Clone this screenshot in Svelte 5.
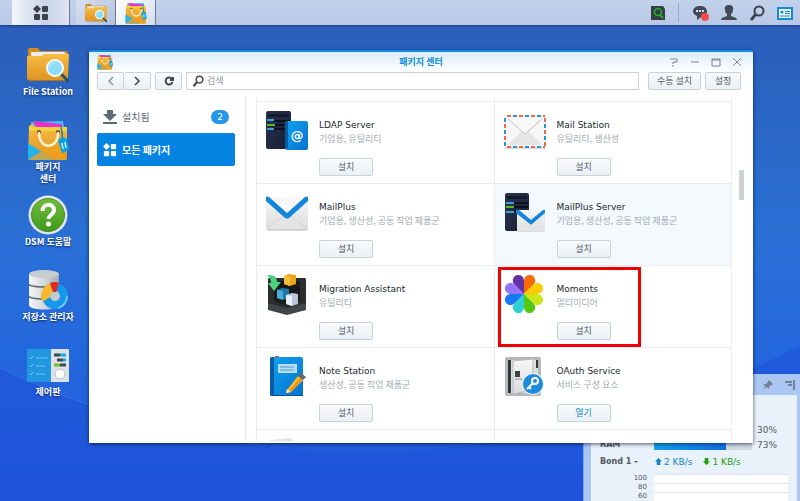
<script>
	let search = $state("");
	let selected = $state("all");

	const shortcuts = [
		{ icon: "folder", lines: ["File Station"] },
		{ icon: "bag", lines: ["패키지", "센터"] },
		{ icon: "help", lines: ["DSM 도움말"] },
		{ icon: "storage", lines: ["저장소 관리자"] },
		{ icon: "control", lines: ["제어판"] }
	];

	const packages = [
		{ icon: "ldap", glyph: "@", name: "LDAP Server", tags: "기업용, 유틸리티", action: "설치" },
		{ icon: "mailstation", name: "Mail Station", tags: "유틸리티, 생산성", action: "설치" },
		{ icon: "mailplus", name: "MailPlus", tags: "기업용, 생산성, 공동 작업 제품군", action: "설치" },
		{ icon: "mailserver", name: "MailPlus Server", tags: "기업용, 생산성, 공동 작업 제품군", action: "설치", hover: true },
		{ icon: "migration", name: "Migration Assistant", tags: "유틸리티", action: "설치" },
		{ icon: "moments", name: "Moments", tags: "멀티미디어", action: "설치", marked: true },
		{ icon: "note", name: "Note Station", tags: "생산성, 공동 작업 제품군", action: "설치" },
		{ icon: "oauth", name: "OAuth Service", tags: "서비스 구성 요소", action: "열기", open: true }
	];

	// clockwise, starting right of twelve o'clock
	const petals = ["#fa6b05", "#ffcc05", "#cce619", "#54c614", "#2ed0cf", "#1679f3", "#9474f8", "#6432a4"];

	const usage = [
		{ label: "", value: 30 },
		{ label: "RAM", value: 73 }
	];

	const scale = [100, 80, 60, 40];
</script>

<svg class="defs" width="0" height="0" aria-hidden="true">
	<defs>
		<linearGradient id="gold" x1="0" y1="0" x2="0" y2="1">
			<stop offset="0" stop-color="#f8bd45" />
			<stop offset="1" stop-color="#de9420" />
		</linearGradient>
		<linearGradient id="green" x1="0" y1="0" x2="0" y2="1">
			<stop offset="0" stop-color="#71bd3c" />
			<stop offset="1" stop-color="#3f9a1c" />
		</linearGradient>
		<linearGradient id="silver" x1="0" y1="0" x2="1" y2="0">
			<stop offset="0" stop-color="#f4f5f6" />
			<stop offset="0.5" stop-color="#d5d9dd" />
			<stop offset="1" stop-color="#a4aab0" />
		</linearGradient>
		<linearGradient id="paper" x1="0" y1="0" x2="0" y2="1">
			<stop offset="0" stop-color="#f6f6f6" />
			<stop offset="1" stop-color="#dcdcdd" />
		</linearGradient>
		<linearGradient id="azure" x1="0" y1="0" x2="1" y2="1">
			<stop offset="0" stop-color="#12a2ee" />
			<stop offset="1" stop-color="#0673cf" />
		</linearGradient>
		<linearGradient id="navy" x1="0" y1="0" x2="1" y2="1">
			<stop offset="0" stop-color="#29324f" />
			<stop offset="1" stop-color="#181d33" />
		</linearGradient>
	</defs>

	<symbol id="folder" viewBox="0 0 42 42">
		<path d="M1 6q0-2 2-2h8l2 3h26q2 0 2 2v8H1z" fill="#d78d1c" />
		<path d="M4 8h33l3 3v5H4z" fill="#ececec" />
		<path d="M0 12h14l4-2h24l-1 24q0 2-2 2H2q-2 0-2-2z" fill="url(#gold)" />
		<path d="M1 36h39v1H1z" fill="#b3720f" />
		<path d="M33 29l8 8" stroke="#25536b" stroke-width="3" stroke-linecap="round" />
		<circle cx="28" cy="24" r="8" fill="#8bdcfa" stroke="#f3fbff" stroke-width="2" />
		<path d="M23 24q0-5 5-5" stroke="#c8f2ff" fill="none" />
	</symbol>

	<symbol id="bag" viewBox="0 0 42 42">
		<path d="M4 3l32-1 2 12H5z" fill="#3ac4f3" />
		<path d="M6 2l29 3v10H12z" fill="#e832cf" />
		<path d="M2 7l3-2 4 3h31v31q0 2-2 2H3q-2 0-2-2z" fill="url(#gold)" />
		<path d="M2 8h38v4H2z" fill="#f7d23b" />
		<path d="M1 24l27 17H3q-2 0-2-2z" fill="#25b3ee" />
		<path d="M1 41l24-16 15 14q0 2-2 2z" fill="#f2a21e" opacity=".75" />
		<circle cx="12" cy="13" r="2" fill="#624c29" />
		<circle cx="31" cy="13" r="2" fill="#624c29" />
		<path d="M12 14c0 17 19 17 19 0" fill="none" stroke="#fff3d2" stroke-width="2.500" stroke-linecap="round" />
		<path d="M34 8q2 7 1 14" fill="none" stroke="#2279a5" stroke-width="1.5" />
		<path d="M31 21l5-3 4 2 2 11-7 3z" fill="#0ba0de" />
		<path d="M35 24l1 6M38 23l1 6" stroke="#c8f1ff" stroke-width="1.5" />
	</symbol>

	<symbol id="help" viewBox="0 0 42 42">
		<circle cx="21" cy="21" r="19.500" fill="#dfe5ec" />
		<circle cx="21" cy="21" r="16.500" fill="url(#green)" stroke="#4a8b29" />
		<path d="M15.500 17c0-8 11.500-8 11.500-1 0 5-5.500 5-5.500 9" fill="none" stroke="#fff" stroke-width="4" />
		<circle cx="21.500" cy="30" r="2.500" fill="#fff" />
	</symbol>

	<symbol id="storage" viewBox="0 0 42 42">
		<path d="M2 5v31c0 6 30 6 30 0V5z" fill="url(#silver)" />
		<ellipse cx="17" cy="5" rx="15" ry="4" fill="#c8cdd2" />
		<path d="M2 15c0 4 30 4 30 0M2 27c0 4 30 4 30 0" fill="none" stroke="#5d6973" stroke-width="1.500" />
		<circle cx="28" cy="27" r="9" fill="none" stroke="#1698ea" stroke-width="8" />
		<circle cx="28" cy="27" r="5" fill="#c3c9cf" />
		<path d="M14 29a14 14 0 0 1 9-15l3 9a5 5 0 0 0-3 5l-6 4q-2-1-3-3z" fill="#f7b92c" />
		<path d="M23 14q5-2 9 0l-3 9h-3z" fill="#e22a22" />
		<path d="M40 27a12 12 0 0 1-9 12" fill="none" stroke="#69c8fb" stroke-width="2" />
	</symbol>

	<symbol id="control" viewBox="0 0 42 42">
		<path d="M0 5h24v33H0z" fill="#2097df" />
		<path d="M24 5h17q1 0 1 1v31q0 1-1 1H24z" fill="#dce3e8" />
		<path d="M3 14l1 1 2-3M3 22l1 1 2-3M3 30l1 1 2-3M9 14h12M9 22h9M9 30h9" fill="none" stroke="#69c7f5" />
		<path d="M27 11h6M30 16h6M33 21h6" stroke="#40484e" stroke-width="3" />
		<path d="M33 11h6M36 16h3" stroke="#18a7df" stroke-width="3" />
		<path d="M27 21h6" stroke="#6fbe27" stroke-width="3" />
		<circle cx="33" cy="30" r="5" fill="#fff" stroke="#b6c0c7" />
	</symbol>

	<symbol id="ldap" viewBox="0 0 42 42">
		<path d="M0 3q0-2 2-2h21q2 0 2 2v36H2q-2 0-2-2z" fill="url(#navy)" />
		<path d="M2 4h21v3H2z" fill="#141a2a" />
		<path d="M8 11h16M8 15h16M8 19h16" stroke="#0c101c" stroke-width="2" />
		<path d="M1 10h7M1 19h7" stroke="#3f9fd1" stroke-width="2" />
		<path d="M1 15h8" stroke="#58bd19" stroke-width="2" />
		<path d="M19 14q0-3 3-3h18q2 0 2 2v25q0 2-2 2H22q-3 0-3-2z" fill="url(#azure)" />
		<path d="M19 14q0-3 3-3v27q-3 0-3 2z" fill="#055aa2" />
	</symbol>

	<symbol id="mailstation" viewBox="0 0 42 42">
		<rect x="0" y="5" width="42" height="33" rx="1" fill="#f7f7f7" />
		<path d="M1 38h40" stroke="#b9bbbd" />
		<path d="M3 6h38M3 37h38" stroke="#ed6b45" stroke-width="2" stroke-dasharray="4 8" />
		<path d="M9 6h32M9 37h32" stroke="#2995db" stroke-width="2" stroke-dasharray="4 8" />
		<path d="M1 8v28M41 14v22" stroke="#2995db" stroke-width="2" stroke-dasharray="4 8" />
		<path d="M1 14v22M41 8v28" stroke="#ed6b45" stroke-width="2" stroke-dasharray="4 8" />
		<path d="M3 35l15-14h6l15 14z" fill="#e6e6e7" />
		<path d="M4 9l17 15L38 9" fill="#f9f9f9" stroke="#bcbec1" />
	</symbol>

	<symbol id="mailplus" viewBox="0 0 42 42">
		<path d="M0 6h42v30q0 2-2 2H2q-2 0-2-2z" fill="url(#paper)" />
		<path d="M1 37l19-15h2l19 15" fill="#e4e4e5" stroke="#d2d2d4" />
		<path d="M1 37q0 1 2 1h36q2 0 2-1" fill="none" stroke="#b9babc" />
		<path d="M1 7q20 0 40 0L21 24z" fill="#f8f8f8" />
		<path d="M0 5q2-1 3 0l18 16L39 5q1-1 3 0v4L23 26q-2 1-4 0L0 9z" fill="#1485dd" />
	</symbol>

	<symbol id="mailserver" viewBox="0 0 42 42">
		<path d="M1 3q0-2 2-2h20q2 0 2 2v36H3q-2 0-2-2z" fill="url(#navy)" />
		<path d="M3 4h20v3H3z" fill="#141a2a" />
		<path d="M9 11h15M9 15h15M9 19h15" stroke="#0c101c" stroke-width="2" />
		<path d="M2 11h8M2 20h8" stroke="#3f9fd1" stroke-width="2" />
		<path d="M2 15h8" stroke="#58bd19" stroke-width="2" />
		<path d="M13 18h28v20q0 2-2 2H13z" fill="url(#paper)" />
		<path d="M13 39l13-11h2l13 11" fill="#e4e4e5" />
		<path d="M12 18h3l12 10 12-10h2v3L28 32q-1 1-2 0L12 21z" fill="#1485dd" />
	</symbol>

	<symbol id="migration" viewBox="0 0 42 42">
		<path d="M3 4h36q1 0 1 2v26l-19 7-19-7V5z" fill="#2b2d2f" />
		<path d="M8 7h26v20l-13 5-13-5z" fill="#17191b" />
		<path d="M2 29l19 5 19-5v7l-19 5-19-5z" fill="#424548" />
		<path d="M18 2l5-2 7 1v9l-6 2-6-2z" fill="#e9a51c" />
		<path d="M18 2l6 1v9l-6-2z" fill="#f7bd38" />
		<path d="M11 16l5-2 7 1v9l-6 2-6-2z" fill="#2176ac" />
		<path d="M11 16l6 1v9l-6-2z" fill="#4caad6" />
		<path d="M20 21l6-2 6 1v10l-6 2-6-2z" fill="#bac6d7" />
		<path d="M20 21l6 1v10l-6-2z" fill="#e8eff7" />
		<path d="M1 1q10-1 10 7h4L8 17 2 9h3q0-5-4-8z" fill="#4ad27c" />
	</symbol>

	<symbol id="moments" viewBox="0 0 42 42">
		{#each petals as color, i}
			<path
				d="M0 0L-5.200-12.500A5.600 5.600 0 1 1 5.200-12.500z"
				transform="translate(20 20) rotate({22.5 + i * 45})"
				fill={color} />
		{/each}
	</symbol>

	<symbol id="note" viewBox="0 0 42 42">
		<path d="M6 1h6v3H6z" fill="#efba26" />
		<path d="M9 0h4v3H9zM13 1h3v3h-3z" fill="#ef3d36" />
		<rect x="4" y="1" width="33" height="39" rx="2" fill="url(#azure)" />
		<path d="M4 3q0-2 2-2h2v39H6q-2 0-2-2z" fill="#075ba8" />
		<rect x="12" y="8" width="19" height="9" fill="#b6dff7" />
		<path d="M14 11h14M14 14h14" stroke="#5397ce" />
		<path d="M5 39h32v1H5z" fill="#064f95" />
		<path d="M21 34l11-14 5 4-12 12-5 1z" fill="#fbbd22" />
		<path d="M23 35l11-13 2 1-11 13z" fill="#ef8f16" />
		<path d="M20 36l1-3 4 3-5 1z" fill="#f4dfb3" />
		<path d="M32 20l3-3 5 4-3 3z" fill="#626b72" />
	</symbol>

	<symbol id="oauth" viewBox="0 0 42 42">
		<rect x="1" y="1" width="36" height="39" rx="2" fill="#b5b7ba" />
		<path d="M4 4h30v33H4z" fill="#dedfe0" />
		<path d="M4 4h3v33H4zM32 4h2v8h-2z" fill="#34363a" />
		<path d="M9 5l20-2v31l-20 4z" fill="url(#paper)" stroke="#b7babd" />
		<path d="M11 15h5v6h-5z" fill="#3d4146" />
		<path d="M11 23h7" stroke="#8c9094" />
		<circle cx="29" cy="28" r="11" fill="#e7f0f8" />
		<circle cx="29" cy="28" r="10" fill="#1c89d9" />
		<circle cx="31" cy="25" r="3" fill="none" stroke="#fff" stroke-width="2" />
		<path d="M29 27l-6 6M25 31l2 2" stroke="#fff" stroke-width="2" />
	</symbol>

	<symbol id="grid4" viewBox="0 0 16 16">
		<path d="M4 0l4 4-4 4-4-4z" />
		<rect x="9" y="1" width="6" height="6" rx="1" />
		<rect x="1" y="9" width="6" height="6" rx="1" />
		<rect x="9" y="9" width="6" height="6" rx="1" />
	</symbol>

	<symbol id="lens" viewBox="0 0 16 16">
		<circle cx="10" cy="6" r="4.500" fill="none" stroke="currentColor" stroke-width="2" />
		<path d="M7 9l-5 6" stroke="currentColor" stroke-width="3" />
	</symbol>
</svg>

<div class="desktop">
	<svg class="wallpaper" viewBox="0 0 800 501" preserveAspectRatio="none" aria-hidden="true">
		<path d="M0 368C60 395 110 420 260 445S650 430 800 345V501H0z" fill="#1d50d8" opacity=".5" />
		<path d="M0 368C60 395 110 420 260 445" fill="none" stroke="#3f86ec" opacity=".5" />
	</svg>

	<header class="taskbar">
		<button class="task menu" aria-label="Main menu"><svg><use href="#grid4" /></svg></button>
		<button class="task" aria-label="File Station"><svg><use href="#folder" /></svg></button>
		<button class="task active" aria-label="Package Center"><svg><use href="#bag" /></svg></button>

		<div class="tray">
			<button aria-label="Resource monitor">
				<svg viewBox="0 0 16 16">
					<path d="M1 1h12l2 3v11H1z" fill="#363d48" />
					<circle cx="8" cy="7" r="3.500" fill="none" stroke="#1eb51e" stroke-width="1.500" />
					<path d="M10 10l3 3" stroke="#1eb51e" stroke-width="2" />
				</svg>
			</button>
			<span class="split"></span>
			<button aria-label="Notifications">
				<svg viewBox="0 0 16 16">
					<path d="M7 1c4 0 7 2 7 5.500S11 12 8 12l-4 3v-4C2 10 0 9 0 6.500 0 3 3 1 7 1z" fill="#414954" />
					<path d="M3 6h2M6 6h2M9 6h2" stroke="#d5dded" stroke-width="2" />
					<circle cx="12" cy="12" r="4" fill="#fb4b4b" />
				</svg>
			</button>
			<button aria-label="Options">
				<svg viewBox="0 0 16 16">
					<path d="M8 0c3 0 5 2 4 5 0 2-1 3-2 4v2l5 2q1 1 1 2H0q0-1 1-2l5-2V9C5 8 4 7 4 5 3 2 5 0 8 0z" fill="#414954" />
				</svg>
			</button>
			<button aria-label="Search"><svg><use href="#lens" /></svg></button>
			<button aria-label="Widgets">
				<svg viewBox="0 0 16 16">
					<rect x="1" y="3" width="14" height="11" fill="#e8f5fd" stroke="#168bd3" stroke-width="2" />
					<path d="M1 3h14" stroke="#168bd3" stroke-width="2" />
					<circle cx="5" cy="7" r="1.500" fill="#168bd3" />
					<path d="M8 6.500h5M8 8.500h5M3 11h10" stroke="#168bd3" />
				</svg>
			</button>
		</div>
	</header>

	<nav class="shortcuts">
		{#each shortcuts as item}
			<a href="#{item.icon}">
				<svg><use href="#{item.icon}" /></svg>
				{#each item.lines as line}
					<span>{line}</span>
				{/each}
			</a>
		{/each}
	</nav>

	<aside class="widget">
		<div class="widget-bar">
			<svg viewBox="0 0 10 10"><path d="M6 0l4 4-1 1H8L6 7v2L3 7 0 10l2-4-2-2h3l2-2V1z" fill="#71819b" /></svg>
			<svg viewBox="0 0 10 10"><path d="M0 2h7M3 5h4M9 0v10" stroke="#71819b" stroke-width="2" fill="none" /></svg>
		</div>
		<div class="widget-body">
			{#each usage as row}
				<div class="usage">
					<b>{row.label}</b>
					<div class="track"><div class="fill" style="width: {row.value}%"></div></div>
					<span>{row.value}%</span>
				</div>
			{/each}
			<div class="net">
				<button>Bond 1 <i></i></button>
				<span class="up"><svg viewBox="0 0 8 8"><path d="M4 0l4 4H6v4H2V4H0z" /></svg>2 KB/s</span>
				<span class="down"><svg viewBox="0 0 8 8"><path d="M4 8l4-4H6V0H2v4H0z" /></svg>1 KB/s</span>
			</div>
			<div class="chart">
				{#each scale as tick}
					<span>{tick}</span>
					<div></div>
				{/each}
			</div>
		</div>
	</aside>

	<main class="window">
		<div class="titlebar">
			<svg class="app"><use href="#bag" /></svg>
			<h1>패키지 센터</h1>
			<div class="controls">
				<button aria-label="Help"><svg viewBox="0 0 10 10"><path d="M1 2h7v3H4v2M4 8v2" /></svg></button>
				<button aria-label="Minimize"><svg viewBox="0 0 10 10"><path d="M1 5h8" /></svg></button>
				<button aria-label="Maximize"><svg viewBox="0 0 10 10"><path d="M1 2h8v7H1zM1 3h8" /></svg></button>
				<button aria-label="Close"><svg viewBox="0 0 10 10"><path d="M1 1l8 8M9 1L1 9" /></svg></button>
			</div>
		</div>

		<div class="toolbar">
			<div class="pair">
				<button class="btn off" aria-label="Back"><svg viewBox="0 0 10 10"><path d="M7 1L3 5l4 4" /></svg></button>
				<button class="btn" aria-label="Forward"><svg viewBox="0 0 10 10"><path d="M3 1l4 4-4 4" /></svg></button>
			</div>
			<button class="btn reload" aria-label="Refresh">
				<svg viewBox="0 0 10 10"><path d="M8 3a3.500 3.500 0 1 0 .5 3" /><path d="M6 4h3V1" /></svg>
			</button>
			<label class="search">
				<svg><use href="#lens" /></svg>
				<input type="text" placeholder="검색" aria-label="검색" bind:value={search} />
			</label>
			<button class="btn manual">수동 설치</button>
			<button class="btn settings">설정</button>
		</div>

		<div class="content">
			<nav class="side">
				<button class:selected={selected === "installed"} onclick={() => (selected = "installed")}>
					<svg viewBox="0 0 14 14"><path d="M4 0h6v4h4l-7 7-7-7h4zM0 12h14v2H0z" /></svg>
					설치됨
					<span class="count">2</span>
				</button>
				<button class:selected={selected === "all"} onclick={() => (selected = "all")}>
					<svg><use href="#grid4" /></svg>
					모든 패키지
				</button>
			</nav>

			<div class="list">
				<div></div>
				<div></div>
				{#each packages as pkg}
					<article class:hover={pkg.hover}>
						<svg>
							<use href="#{pkg.icon}" />
							{#if pkg.glyph}
								<text x="31" y="30" text-anchor="middle">{pkg.glyph}</text>
							{/if}
						</svg>
						<div>
							<h2>{pkg.name}</h2>
							<p>{pkg.tags}</p>
							<button class="btn" class:open={pkg.open}>{pkg.action}</button>
						</div>
						{#if pkg.marked}
							<span class="mark"></span>
						{/if}
					</article>
				{/each}
				<article>
					<svg viewBox="0 0 42 42"><path d="M4 2l12-1 7-1 4 2v30H4z" fill="#dfe4e8" /></svg>
				</article>
				<article></article>
			</div>
			<div class="scroll"><span></span></div>
		</div>
	</main>
</div>

<style>
	:global(body) {
		margin: 0;
	}

	.defs {
		position: absolute;
	}

	.desktop {
		position: relative;
		min-height: 100vh;
		overflow: hidden;
		background: linear-gradient(180deg, #2c5cb6 0, #2b66c4 22%, #2a70d6 48%, #2367de 72%, #2057dc 100%);
		font-family: "DejaVu Sans", "Noto Sans CJK KR", sans-serif;
		font-size: 9px;
		line-height: 14px;
		color: #505a64;
	}

	.wallpaper {
		position: absolute;
		inset: 0;
		width: 100%;
		height: 100%;
	}

	button {
		font: inherit;
		color: inherit;
		margin: 0;
		padding: 0;
		border: 0;
		background: none;
		cursor: pointer;
	}

	svg {
		flex: none;
	}

	/* taskbar */
	.taskbar {
		position: relative;
		display: flex;
		height: 25px;
		padding-left: 12px;
		background: linear-gradient(#c3d2eb, #b9c9e6);
		box-shadow: 0 1px 2px rgba(10, 35, 90, 0.6);
	}

	.task {
		display: flex;
		align-items: center;
		justify-content: center;
		width: 40px;
		border-right: 1px solid #6c7c9c;
		background: linear-gradient(135deg, #d7e0f1, #b3c1dd);
	}

	.task svg {
		width: 22px;
		height: 22px;
	}

	.menu {
		width: 58px;
		margin-right: 6px;
		background: linear-gradient(90deg, #f2f5fb, #c9d3e7 60%, #dfe6f3);
	}

	.menu svg {
		width: 16px;
		height: 16px;
		fill: #3b424d;
	}

	.active {
		background: linear-gradient(135deg, #fff, #d5ddec);
	}

	.tray {
		display: flex;
		align-items: center;
		gap: 12px;
		margin-left: auto;
		padding-right: 7px;
		color: #3b424d;
	}

	.tray button,
	.tray svg {
		display: block;
		width: 16px;
		height: 16px;
	}

	.split {
		width: 1px;
		height: 19px;
		margin-right: 2px;
		background: #98a7c3;
	}

	/* desktop shortcuts */
	.shortcuts {
		position: relative;
		display: grid;
		grid-auto-rows: 75px;
		width: 96px;
		padding-top: 19px;
	}

	.shortcuts a {
		display: flex;
		flex-direction: column;
		align-items: center;
		color: #fff;
		font-family: "Noto Sans CJK KR", sans-serif;
		font-weight: 700;
		line-height: 12px;
		text-decoration: none;
		text-shadow: 0 1px 2px rgba(0, 20, 70, 0.8);
	}

	.shortcuts svg {
		width: 42px;
		height: 42px;
	}

	/* package center window */
	.window {
		position: absolute;
		inset: 50px 47px 58px 89px;
		display: flex;
		flex-direction: column;
		box-sizing: border-box;
		border-top: 2px solid #0d8de4;
		background: #fff;
		box-shadow: 0 1px 4px rgba(0, 15, 60, 0.7);
	}

	.titlebar {
		display: flex;
		align-items: center;
		height: 20px;
		padding: 0 11px 0 8px;
		background: linear-gradient(#dcedfb, #fff);
	}

	.app {
		width: 16px;
		height: 16px;
	}

	h1 {
		flex: 1;
		margin: 0;
		padding-left: 60px;
		color: #0d8bdc;
		font: 700 9px/14px "Noto Sans CJK KR", sans-serif;
		text-align: center;
	}

	.controls {
		display: flex;
		gap: 11px;
	}

	.controls svg {
		display: block;
		width: 10px;
		height: 10px;
		fill: none;
		stroke: #7b8794;
	}

	.toolbar {
		display: flex;
		padding: 0 12px 0 8px;
	}

	.btn {
		display: flex;
		align-items: center;
		justify-content: center;
		box-sizing: border-box;
		height: 18px;
		border: 1px solid #c8d2db;
		border-radius: 2px;
		background: linear-gradient(#f9fbfd, #eaf0f6);
		font-family: "Noto Sans CJK KR", sans-serif;
	}

	.toolbar .btn {
		width: 27px;
	}

	.btn svg {
		width: 10px;
		height: 10px;
		fill: none;
		stroke: #3f4750;
		stroke-width: 2;
	}

	.pair {
		display: flex;
		margin-right: 4px;
	}

	.pair .btn + .btn {
		border-left: 0;
	}

	.pair .btn svg {
		stroke-width: 1.5;
	}

	.off svg {
		stroke: #8b949d;
	}

	.search {
		display: flex;
		flex: 1;
		align-items: center;
		box-sizing: border-box;
		height: 18px;
		margin: 0 9px 0 4px;
		padding: 0 5px;
		border: 1px solid #cbd3da;
		color: #414951;
	}

	.search svg {
		width: 12px;
		height: 12px;
	}

	input {
		flex: 1;
		min-width: 0;
		padding: 0 3px;
		border: 0;
		outline: 0;
		background: none;
		font: 9px/14px "Noto Sans CJK KR", sans-serif;
	}

	input::placeholder {
		color: #8c959e;
	}

	.toolbar .manual {
		width: 53px;
		margin-right: 4px;
	}

	.toolbar .settings {
		width: 36px;
	}

	.content {
		display: flex;
		flex: 1;
		min-height: 0;
		margin: 7px 0 2px;
	}

	.side {
		width: 138px;
		padding: 3px 10px 0 8px;
		border-right: 1px solid #e4e8ec;
		box-shadow: 1px 0 1px #f4f6f8;
		font-family: "Noto Sans CJK KR", sans-serif;
	}

	.side button {
		display: flex;
		align-items: center;
		gap: 5px;
		box-sizing: border-box;
		width: 100%;
		height: 33px;
		padding: 0 6px;
		border-radius: 2px;
		color: #606a74;
		font-size: 10px;
	}

	.side svg {
		width: 14px;
		height: 14px;
		fill: currentColor;
	}

	.side .selected {
		background: #0584e4;
		color: #fff;
		font-weight: 700;
	}

	.count {
		width: 18px;
		margin-left: auto;
		border-radius: 7px;
		background: #2596e8;
		color: #fff;
		font: 9px/14px "DejaVu Sans", sans-serif;
		text-align: center;
	}

	.list {
		display: grid;
		flex: 1;
		grid-template-columns: 1fr 1fr;
		grid-template-rows: 5px;
		grid-auto-rows: min-content;
		align-content: start;
		overflow: hidden;
		margin-left: 10px;
		border-right: 1px solid #e9edf1;
	}

	.list > * {
		border-bottom: 1px solid #e9edf1;
		border-left: 1px solid #e9edf1;
	}

	article {
		position: relative;
		display: flex;
		gap: 11px;
		min-height: 73px;
		padding: 8px 0 0 9px;
	}

	.hover {
		background: #f4f9fe;
	}

	article > svg {
		width: 42px;
		height: 42px;
	}

	article text {
		fill: #fff;
		font-size: 13px;
		font-weight: 700;
	}

	article > div {
		padding: 8px 0 7px;
	}

	h2,
	p {
		margin: 0;
		font-size: 9px;
		font-weight: 400;
		line-height: 14px;
	}

	h2 {
		color: #22282e;
	}

	p {
		color: #a4abb2;
		font-family: "Noto Sans CJK KR", sans-serif;
	}

	article .btn {
		width: 54px;
		margin-top: 12px;
	}

	.open {
		color: #0d8bcb;
	}

	.mark {
		position: absolute;
		inset: 1px auto 0 3px;
		box-sizing: border-box;
		width: 143px;
		border: 3px solid #f00000;
	}

	.scroll {
		width: 21px;
		padding-top: 73px;
	}

	.scroll span {
		display: block;
		width: 5px;
		height: 30px;
		margin-left: 7px;
		background: #cfd2d5;
	}

	/* resource widget */
	.widget {
		position: absolute;
		top: 374px;
		right: 0;
		bottom: 0;
		box-sizing: border-box;
		width: 217px;
		padding: 0 3px 0 7px;
		overflow: hidden;
		border-left: 1px solid #7fa5e4;
		background: #abc7f1;
	}

	.widget-bar {
		display: flex;
		align-items: center;
		justify-content: flex-end;
		gap: 12px;
		height: 21px;
		padding-right: 2px;
	}

	.widget-bar svg {
		width: 10px;
		height: 10px;
	}

	.widget-body {
		min-height: 100%;
		padding: 27px 9px 0;
		background: #e9f1fb;
	}

	.usage {
		display: grid;
		grid-template-columns: 54px 98px 1fr;
		align-items: center;
		height: 15px;
	}

	.usage b {
		font-size: 8px;
	}

	.usage span {
		padding-left: 5px;
	}

	.track {
		height: 10px;
		background: #d0dae5;
	}

	.fill {
		height: 10px;
		background: linear-gradient(90deg, #12a0ee, #0f6ee2);
	}

	.net {
		display: flex;
		align-items: center;
		height: 20px;
	}

	.net button {
		width: 55px;
		font-size: 8px;
		font-weight: 700;
		text-align: left;
	}

	.net i {
		display: inline-block;
		border: 2px solid transparent;
		border-top-color: #505a64;
		border-bottom: 0;
		vertical-align: middle;
	}

	.net span {
		margin-right: 11px;
	}

	.net svg {
		width: 7px;
		height: 7px;
		margin-right: 2px;
		fill: currentColor;
	}

	.up {
		color: #0f83d4;
	}

	.down {
		color: #1f9d0f;
	}

	.chart {
		display: grid;
		grid-template-columns: 47px 1fr;
		column-gap: 7px;
		padding-top: 2px;
		font-size: 7px;
		line-height: 9px;
	}

	.chart span {
		text-align: right;
	}

	.chart div {
		border-top: 1px solid #dfe6ee;
		background: #fff;
	}
</style>
